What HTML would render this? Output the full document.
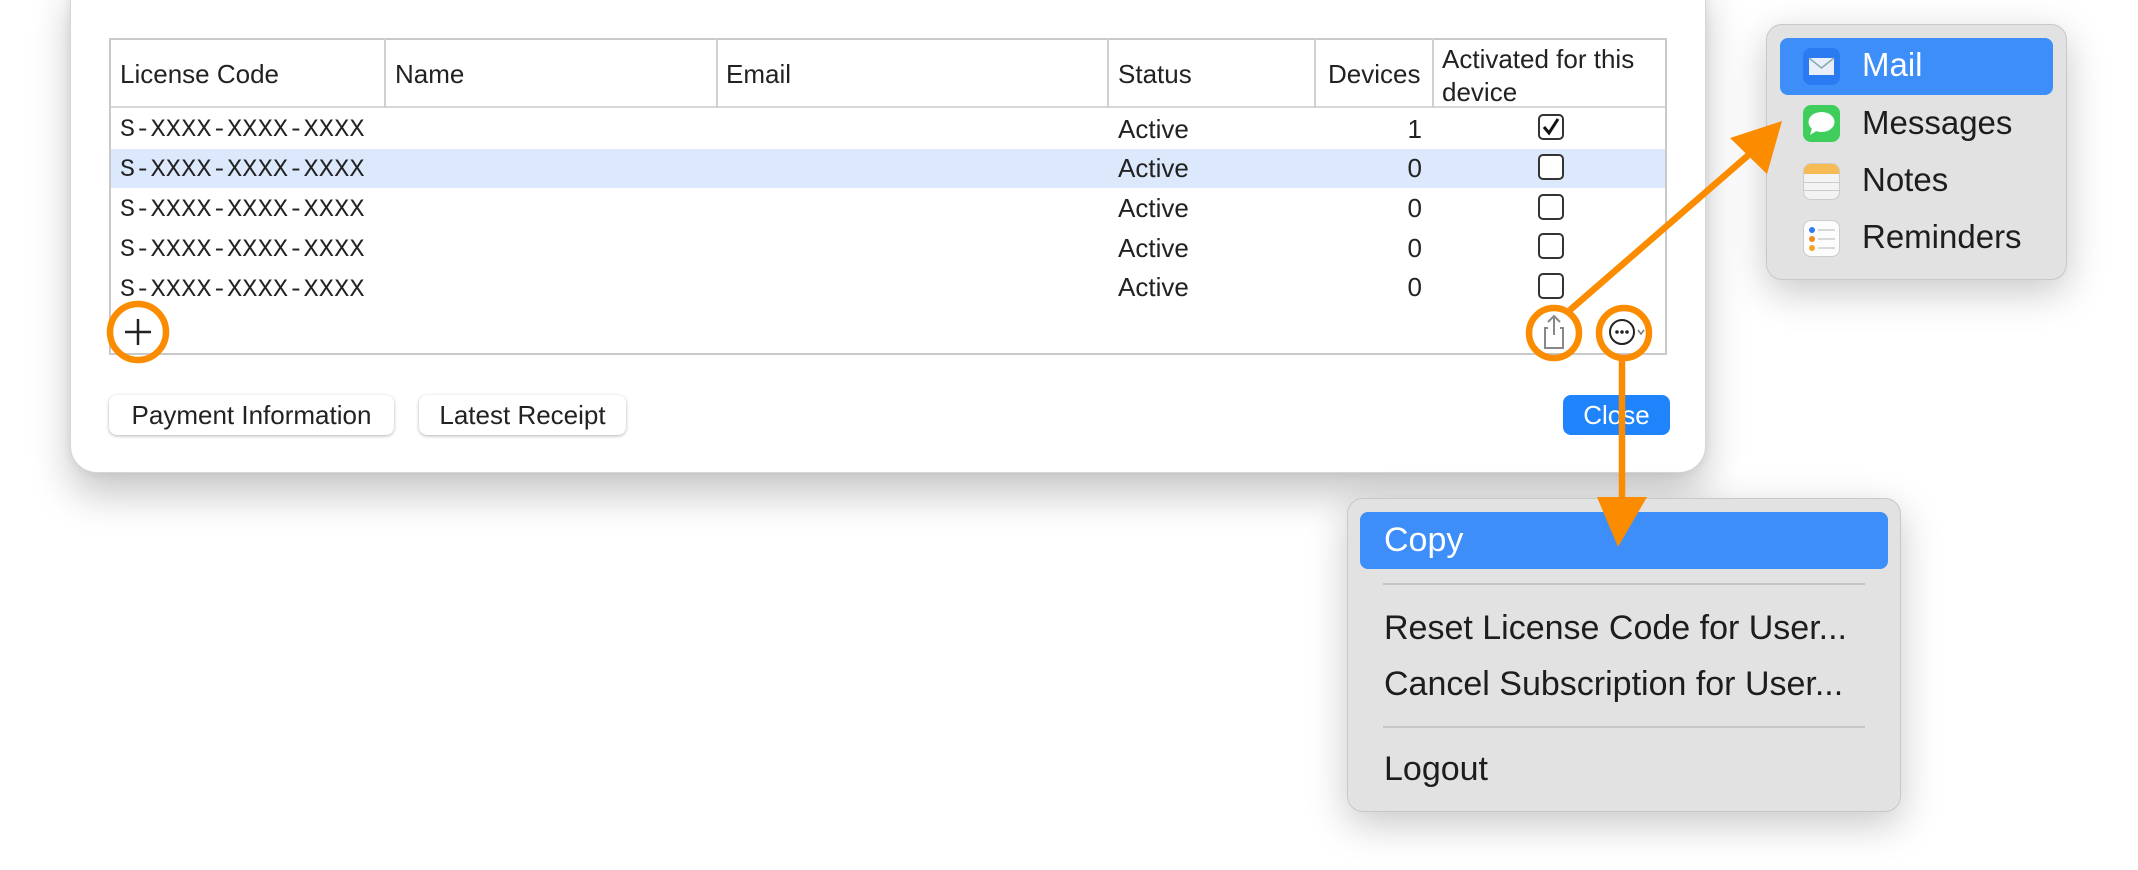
<!DOCTYPE html>
<html><head><meta charset="utf-8"><style>
*{margin:0;padding:0;box-sizing:border-box}
body{width:2138px;height:870px;background:#fff;position:relative;overflow:hidden;font-family:"Liberation Sans",sans-serif;color:#1d1d1d}
.abs{position:absolute}
.win{left:70px;top:-30px;width:1636px;height:503px;background:#fff;border-radius:27px;border:1px solid #d6d6d6;box-shadow:0 22px 40px rgba(0,0,0,.22),0 0 10px rgba(0,0,0,.08)}
.tbl{left:109px;top:38px;width:1558px;height:317px;border:2px solid #c9c9c9;background:#fff}
.hd{font-size:26px;color:#222}
.vl{top:38px;height:70px;width:2px;background:#d0d0d0}
.mono{font-family:"Liberation Mono",monospace;font-size:25px;color:#222;letter-spacing:.3px}
.cell{font-size:26px;color:#222}
.cb{width:26px;height:26px;border:2px solid #333;border-radius:5px;background:#fff}
.btn{height:40px;top:395px;border-radius:8px;background:#fff;box-shadow:0 1px 3px rgba(0,0,0,.3);font-size:26px;text-align:center;line-height:40px;color:#222}
.menu{background:#e2e2e2;border:1px solid #c8c8c8;border-radius:16px;box-shadow:0 12px 40px rgba(0,0,0,.22)}
.mi{font-size:33px;color:#1d1d1d}
.ci{font-size:34px;color:#1d1d1d}
</style></head><body>
<div class="abs win"></div>
<div class="abs tbl"></div>
<div class="abs" style="left:111px;top:106px;width:1554px;height:2px;background:#d8d8d8"></div>
<div class="abs vl" style="left:384px"></div>
<div class="abs vl" style="left:716px"></div>
<div class="abs vl" style="left:1107px"></div>
<div class="abs vl" style="left:1314px"></div>
<div class="abs vl" style="left:1432px"></div>
<div class="abs hd" style="left:120px;top:59px">License Code</div>
<div class="abs hd" style="left:395px;top:59px">Name</div>
<div class="abs hd" style="left:726px;top:59px">Email</div>
<div class="abs hd" style="left:1118px;top:59px">Status</div>
<div class="abs hd" style="left:1328px;top:59px">Devices</div>
<div class="abs hd" style="left:1442px;top:43px;line-height:33px">Activated for this<br>device</div>
<div class="abs" style="left:111px;top:149px;width:1554px;height:39px;background:#dce9fc"></div>

<div class="abs mono" style="left:120px;top:115px">S-XXXX-XXXX-XXXX</div>
<div class="abs mono" style="left:120px;top:155px">S-XXXX-XXXX-XXXX</div>
<div class="abs mono" style="left:120px;top:195px">S-XXXX-XXXX-XXXX</div>
<div class="abs mono" style="left:120px;top:235px">S-XXXX-XXXX-XXXX</div>
<div class="abs mono" style="left:120px;top:275px">S-XXXX-XXXX-XXXX</div>
<div class="abs cell" style="left:1118px;top:114px">Active</div>
<div class="abs cell" style="left:1118px;top:153px">Active</div>
<div class="abs cell" style="left:1118px;top:193px">Active</div>
<div class="abs cell" style="left:1118px;top:233px">Active</div>
<div class="abs cell" style="left:1118px;top:272px">Active</div>
<div class="abs cell" style="left:1400px;top:114px;width:22px;text-align:right">1</div>
<div class="abs cell" style="left:1400px;top:153px;width:22px;text-align:right">0</div>
<div class="abs cell" style="left:1400px;top:193px;width:22px;text-align:right">0</div>
<div class="abs cell" style="left:1400px;top:233px;width:22px;text-align:right">0</div>
<div class="abs cell" style="left:1400px;top:272px;width:22px;text-align:right">0</div>
<div class="abs cb" style="left:1538px;top:114px"><svg width="22" height="22" viewBox="0 0 22 22"><path d="M4 11 L9 17 L18 3" fill="none" stroke="#111" stroke-width="3"/></svg></div>
<div class="abs cb" style="left:1538px;top:154px"></div>
<div class="abs cb" style="left:1538px;top:194px"></div>
<div class="abs cb" style="left:1538px;top:233px"></div>
<div class="abs cb" style="left:1538px;top:273px"></div>

<svg class="abs" style="left:0;top:0" width="2138" height="870">
<path d="M125 332 H151 M138 319 V345" stroke="#222" stroke-width="2.5"/>
<path d="M1548 328 H1545 V348 H1563 V328 H1560 M1554 335 V316 M1548 322 L1554 316 L1560 322" fill="none" stroke="#888" stroke-width="2"/>
<circle cx="1622" cy="332" r="12" fill="none" stroke="#222" stroke-width="2"/>
<circle cx="1617" cy="332" r="1.8" fill="#222"/><circle cx="1622" cy="332" r="1.8" fill="#222"/><circle cx="1627" cy="332" r="1.8" fill="#222"/>
<path d="M1638 330 L1641 334 L1644 330" fill="none" stroke="#777" stroke-width="1.5"/>
</svg>

<div class="abs btn" style="left:109px;width:285px">Payment Information</div>
<div class="abs btn" style="left:419px;width:207px">Latest Receipt</div>
<div class="abs btn" style="left:1563px;width:107px;background:#1f84fb;color:#fff;box-shadow:none">Close</div>

<div class="abs menu" style="left:1766px;top:24px;width:301px;height:256px"></div>
<div class="abs" style="left:1780px;top:38px;width:273px;height:57px;background:#3d8ef8;border-radius:8px"></div>
<div class="abs" style="left:1803px;top:48px;width:37px;height:37px;border-radius:8px;background:#2a7bf2"><svg width="37" height="37"><rect x="6" y="10" width="25" height="17" fill="#e8eefa"/><path d="M6 10 L18.5 20 L31 10" fill="none" stroke="#8aa" stroke-width="1.5"/></svg></div>
<div class="abs" style="left:1803px;top:105px;width:37px;height:37px;border-radius:8px;background:#3fce5b"><svg width="37" height="37"><ellipse cx="18.5" cy="17" rx="13" ry="10" fill="#fff"/><path d="M9 23 L7 30 L15 25" fill="#fff"/></svg></div>
<div class="abs" style="left:1803px;top:163px;width:37px;height:37px;border-radius:8px;background:#f3f3f3;border:1px solid #ccc;overflow:hidden"><div style="height:10px;background:#f7bb55"></div><div style="margin-top:8px;height:1px;background:#ccc"></div><div style="margin-top:7px;height:1px;background:#ccc"></div></div>
<div class="abs" style="left:1803px;top:220px;width:37px;height:37px;border-radius:8px;background:#fcfcfc;border:1px solid #ccc"><svg width="37" height="37"><circle cx="8" cy="9" r="3" fill="#2f7bf5"/><circle cx="8" cy="18" r="3" fill="#f08a1d"/><circle cx="8" cy="27" r="3" fill="#f4a623"/><path d="M14 9 H31 M14 18 H31 M14 27 H31" stroke="#ccc" stroke-width="1.5"/></svg></div>
<div class="abs mi" style="left:1862px;top:46px;color:#fff">Mail</div>
<div class="abs mi" style="left:1862px;top:104px">Messages</div>
<div class="abs mi" style="left:1862px;top:161px">Notes</div>
<div class="abs mi" style="left:1862px;top:218px">Reminders</div>

<div class="abs menu" style="left:1347px;top:498px;width:554px;height:314px"></div>
<div class="abs" style="left:1360px;top:512px;width:528px;height:57px;background:#3d8ef8;border-radius:8px"></div>
<div class="abs" style="left:1383px;top:583px;width:482px;height:2px;background:#c6c6c6"></div>
<div class="abs" style="left:1383px;top:726px;width:482px;height:2px;background:#c6c6c6"></div>
<div class="abs ci" style="left:1384px;top:521px;color:#fff">Copy</div>
<div class="abs ci" style="left:1384px;top:609px">Reset License Code for User...</div>
<div class="abs ci" style="left:1384px;top:665px">Cancel Subscription for User...</div>
<div class="abs ci" style="left:1384px;top:750px">Logout</div>

<svg class="abs" style="left:0;top:0" width="2138" height="870">
<g fill="none" stroke="#fb8c00" stroke-width="6.5">
<circle cx="138" cy="332" r="28"/>
<circle cx="1554" cy="333" r="25"/>
<circle cx="1624" cy="333" r="25"/>
<path d="M1570 310 L1752 152"/>
<path d="M1622 358 L1622 505"/>
</g>
<path d="M1782 121 L1730 138 L1767 174 Z" fill="#fb8c00"/>
<path d="M1597 497 L1647 497 L1618 547 Z" fill="#fb8c00"/>
</svg>
</body></html>
